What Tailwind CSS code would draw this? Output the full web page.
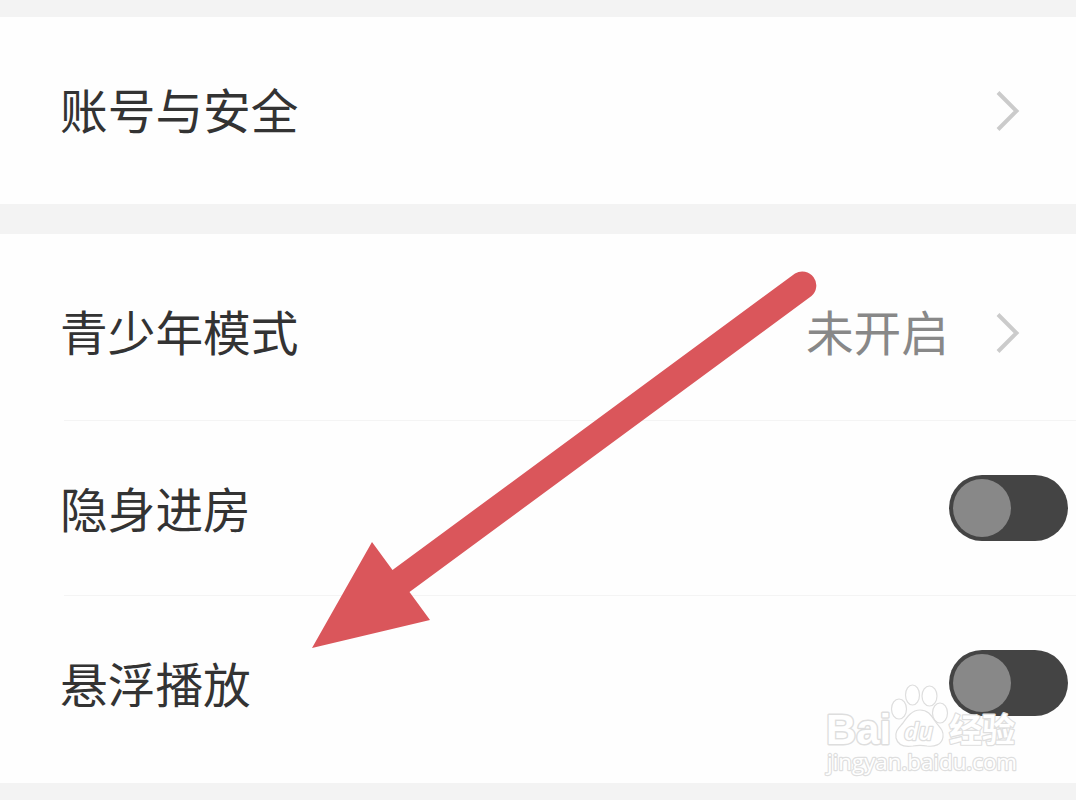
<!DOCTYPE html>
<html lang="zh-CN">
<head>
<meta charset="utf-8">
<title>设置</title>
<script src="https://cdn.jsdelivr.net/npm/@tailwindcss/browser@4"></script>
</head>
<body class="bg-[#f3f3f3]">
<div class="relative w-[1076px] h-[800px] overflow-hidden pt-[17px] font-['Noto_Sans_CJK_SC',sans-serif] text-[47.7px] leading-none text-[#333]">
    <div class="flex items-center justify-between h-[187px] pl-[60px] pr-[54px] bg-[#fefefe]">
        <span class="pb-1">账号与安全</span>
        <svg class="w-7 h-11" viewBox="0 0 28 44" fill="none" stroke="#cbcbcb" stroke-width="4"><path d="M4 3.500 22.500 22 4 40.500"/></svg>
    </div>
    <div class="mt-[30px] h-[549px] bg-[#fefefe]">
        <div class="flex items-center h-[186px] pl-[60px] pr-[54px] pt-3">
            <span class="pb-1">青少年模式</span>
            <span class="ml-auto mr-[45px] pb-1 text-[#888]">未开启</span>
            <svg class="w-7 h-11" viewBox="0 0 28 44" fill="none" stroke="#cbcbcb" stroke-width="4"><path d="M4 3.500 22.500 22 4 40.500"/></svg>
        </div>
        <div class="ml-16 h-px bg-[#f4f4f4]"></div>
        <div class="flex items-center justify-between h-[174px] pl-[60px] pr-2">
            <span class="pb-px">隐身进房</span>
            <div class="flex items-center w-[119px] h-[66px] pl-1 rounded-full bg-[#444]">
                <div class="size-[58px] rounded-full bg-[#888]"></div>
            </div>
        </div>
        <div class="ml-16 h-px bg-[#f4f4f4]"></div>
        <div class="flex items-center justify-between h-[174px] pl-[60px] pr-2">
            <span class="pb-px">悬浮播放</span>
            <div class="flex items-center w-[119px] h-[66px] pl-1 rounded-full bg-[#444]">
                <div class="size-[58px] rounded-full bg-[#888]"></div>
            </div>
        </div>
    </div>

    <!-- arrow -->
    <svg class="absolute left-0 top-0" width="1076" height="800" viewBox="0 0 1076 800">
        <path fill="#da565b" d="M312 648 372 542 392.500 570 795 273.500A14 14 0 0 1 811.500 296L409.500 592 430 620Z"/>
    </svg>

    <!-- watermark -->
    <svg class="absolute left-[810px] top-[670px]" width="266" height="115" viewBox="810 670 266 115" fill="#fff" stroke="#dedede" stroke-width="1.200" stroke-linejoin="round">
        <text x="826" y="744" font-family="Liberation Sans, sans-serif" font-weight="bold" font-size="43" textLength="65" lengthAdjust="spacingAndGlyphs" stroke-width="3" paint-order="stroke">Bai</text>
        <ellipse cx="899" cy="709" rx="7.500" ry="10"/>
        <ellipse cx="912.500" cy="695" rx="7" ry="10"/>
        <ellipse cx="929.500" cy="696" rx="7.500" ry="10"/>
        <ellipse cx="940" cy="713" rx="7.500" ry="10"/>
        <path d="M920 710C912 710 907 717 903 723 898 729 895 731 896 738 898 746 906 747 913 746 918 745 922 745 927 746 934 747 942 745 943 737 944 730 939 727 935 721 931 715 928 710 920 710Z"/>
        <text x="904" y="740" font-family="Open Sans, sans-serif" font-weight="600" font-style="italic" font-size="23" textLength="29" lengthAdjust="spacingAndGlyphs" stroke-width="2.400" paint-order="stroke">du</text>
        <text x="949" y="742" font-family="Noto Sans CJK SC, sans-serif" font-weight="bold" font-size="33" stroke-width="2.400" paint-order="stroke">经验</text>
        <text x="827" y="770" font-family="Open Sans, sans-serif" font-size="22" textLength="190" lengthAdjust="spacingAndGlyphs" stroke-width="2.400" paint-order="stroke">jingyan.baidu.com</text>
    </svg>
</div>
</body>
</html>
